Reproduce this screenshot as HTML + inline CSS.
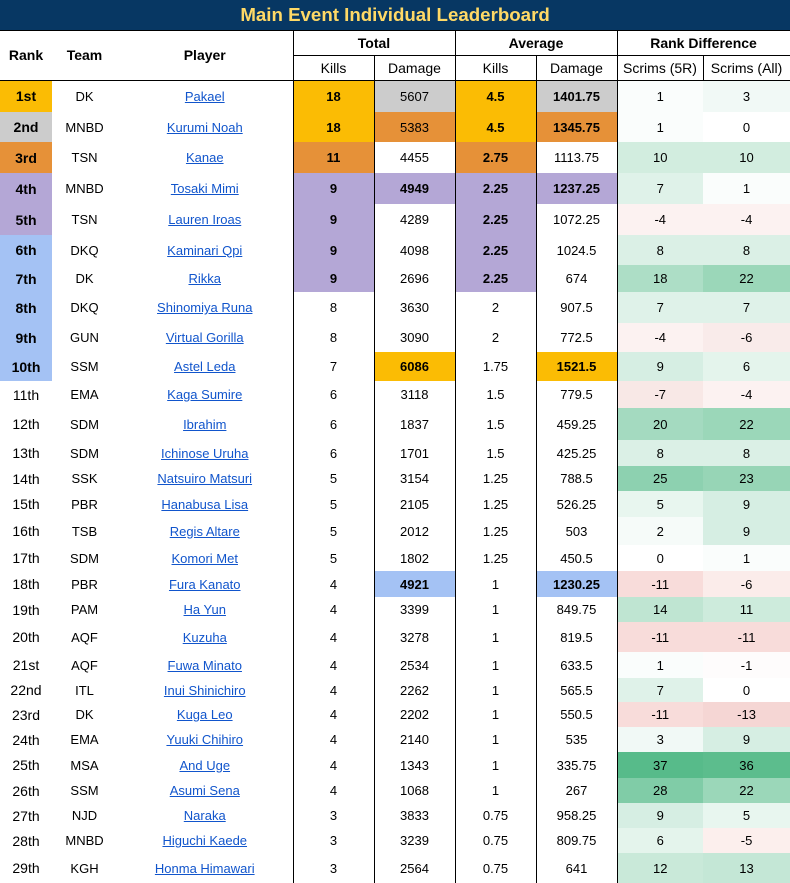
<!DOCTYPE html>
<html><head><meta charset="utf-8"><style>
*{margin:0;padding:0;box-sizing:border-box}
body{width:790px;height:883px;overflow:hidden;background:#fff;font-family:"Liberation Sans",Arial,sans-serif;color:#000}
table{border-collapse:collapse;table-layout:fixed;width:790px}
td{text-align:center;vertical-align:middle;font-size:13px;padding:0;white-space:nowrap;overflow:hidden}
.t td{background:#073763;color:#ffd966;font-weight:bold;font-size:18.7px;border-bottom:1px solid #000}
.h2 td{font-size:14px;border:1px solid #000}
.hb{font-weight:bold;font-size:14px}
.l{border-left:1px solid #000}
.rk{font-size:14px}
b{font-weight:bold}
a{color:#1155cc;text-decoration:underline}
.G{background:#fbbc04}.S{background:#cccccc}.O{background:#e69138}.P{background:#b4a7d6}.B{background:#a4c2f4}
tr.d td.rk.B,tr.d td.rk.G,tr.d td.rk.S,tr.d td.rk.O,tr.d td.rk.P{font-weight:bold}
</style></head><body>
<table>
<colgroup><col style="width:52px"><col style="width:65px"><col style="width:176px"><col style="width:81px"><col style="width:81px"><col style="width:81px"><col style="width:81px"><col style="width:86px"><col style="width:87px"></colgroup>
<tr class="t" style="height:30px"><td colspan="9">Main Event Individual Leaderboard</td></tr>
<tr style="height:25px"><td rowspan="2" class="hb" style="border-bottom:1px solid #000">Rank</td><td rowspan="2" class="hb" style="border-bottom:1px solid #000">Team</td><td rowspan="2" class="hb" style="border-bottom:1px solid #000">Player</td>
<td colspan="2" class="hb" style="border:1px solid #000">Total</td><td colspan="2" class="hb" style="border:1px solid #000">Average</td><td colspan="2" class="hb" style="border:1px solid #000">Rank Difference</td></tr>
<tr class="h2" style="height:25px"><td>Kills</td><td>Damage</td><td>Kills</td><td>Damage</td><td>Scrims (5R)</td><td>Scrims (All)</td></tr>

<tr class="d" style="height:32px"><td class="rk G">1st</td><td>DK</td><td><a>Pakael</a></td><td class="l G"><b>18</b></td><td class="l S">5607</td><td class="l G"><b>4.5</b></td><td class="l S"><b>1401.75</b></td><td class="l" style="background:#fafdfc">1</td><td style="background:#f1f9f6">3</td></tr>
<tr class="d" style="height:30px"><td class="rk S">2nd</td><td>MNBD</td><td><a>Kurumi Noah</a></td><td class="l G"><b>18</b></td><td class="l O">5383</td><td class="l G"><b>4.5</b></td><td class="l O"><b>1345.75</b></td><td class="l" style="background:#fafdfc">1</td><td>0</td></tr>
<tr class="d" style="height:31px"><td class="rk O">3rd</td><td>TSN</td><td><a>Kanae</a></td><td class="l O"><b>11</b></td><td class="l">4455</td><td class="l O"><b>2.75</b></td><td class="l">1113.75</td><td class="l" style="background:#d2eddf">10</td><td style="background:#d2eddf">10</td></tr>
<tr class="d" style="height:31px"><td class="rk P">4th</td><td>MNBD</td><td><a>Tosaki Mimi</a></td><td class="l P"><b>9</b></td><td class="l P"><b>4949</b></td><td class="l P"><b>2.25</b></td><td class="l P"><b>1237.25</b></td><td class="l" style="background:#dff2e9">7</td><td style="background:#fafdfc">1</td></tr>
<tr class="d" style="height:31px"><td class="rk P">5th</td><td>TSN</td><td><a>Lauren Iroas</a></td><td class="l P"><b>9</b></td><td class="l">4289</td><td class="l P"><b>2.25</b></td><td class="l">1072.25</td><td class="l" style="background:#fcf2f1">-4</td><td style="background:#fcf2f1">-4</td></tr>
<tr class="d" style="height:30px"><td class="rk B">6th</td><td>DKQ</td><td><a>Kaminari Qpi</a></td><td class="l P"><b>9</b></td><td class="l">4098</td><td class="l P"><b>2.25</b></td><td class="l">1024.5</td><td class="l" style="background:#dbf0e6">8</td><td style="background:#dbf0e6">8</td></tr>
<tr class="d" style="height:27px"><td class="rk B">7th</td><td>DK</td><td><a>Rikka</a></td><td class="l P"><b>9</b></td><td class="l">2696</td><td class="l P"><b>2.25</b></td><td class="l">674</td><td class="l" style="background:#addec6">18</td><td style="background:#9bd7b9">22</td></tr>
<tr class="d" style="height:31px"><td class="rk B">8th</td><td>DKQ</td><td><a>Shinomiya Runa</a></td><td class="l">8</td><td class="l">3630</td><td class="l">2</td><td class="l">907.5</td><td class="l" style="background:#dff2e9">7</td><td style="background:#dff2e9">7</td></tr>
<tr class="d" style="height:29px"><td class="rk B">9th</td><td>GUN</td><td><a>Virtual Gorilla</a></td><td class="l">8</td><td class="l">3090</td><td class="l">2</td><td class="l">772.5</td><td class="l" style="background:#fcf2f1">-4</td><td style="background:#f9ebea">-6</td></tr>
<tr class="d" style="height:29px"><td class="rk B">10th</td><td>SSM</td><td><a>Astel Leda</a></td><td class="l">7</td><td class="l G"><b>6086</b></td><td class="l">1.75</td><td class="l G"><b>1521.5</b></td><td class="l" style="background:#d6eee3">9</td><td style="background:#e4f4ec">6</td></tr>
<tr class="d" style="height:27px"><td class="rk">11th</td><td>EMA</td><td><a>Kaga Sumire</a></td><td class="l">6</td><td class="l">3118</td><td class="l">1.5</td><td class="l">779.5</td><td class="l" style="background:#f8e8e6">-7</td><td style="background:#fcf2f1">-4</td></tr>
<tr class="d" style="height:32px"><td class="rk">12th</td><td>SDM</td><td><a>Ibrahim</a></td><td class="l">6</td><td class="l">1837</td><td class="l">1.5</td><td class="l">459.25</td><td class="l" style="background:#a4dac0">20</td><td style="background:#9bd7b9">22</td></tr>
<tr class="d" style="height:26px"><td class="rk">13th</td><td>SDM</td><td><a>Ichinose Uruha</a></td><td class="l">6</td><td class="l">1701</td><td class="l">1.5</td><td class="l">425.25</td><td class="l" style="background:#dbf0e6">8</td><td style="background:#dbf0e6">8</td></tr>
<tr class="d" style="height:25px"><td class="rk">14th</td><td>SSK</td><td><a>Natsuiro Matsuri</a></td><td class="l">5</td><td class="l">3154</td><td class="l">1.25</td><td class="l">788.5</td><td class="l" style="background:#8dd1b0">25</td><td style="background:#97d5b6">23</td></tr>
<tr class="d" style="height:26px"><td class="rk">15th</td><td>PBR</td><td><a>Hanabusa Lisa</a></td><td class="l">5</td><td class="l">2105</td><td class="l">1.25</td><td class="l">526.25</td><td class="l" style="background:#e8f6ef">5</td><td style="background:#d6eee3">9</td></tr>
<tr class="d" style="height:28px"><td class="rk">16th</td><td>TSB</td><td><a>Regis Altare</a></td><td class="l">5</td><td class="l">2012</td><td class="l">1.25</td><td class="l">503</td><td class="l" style="background:#f6fbf9">2</td><td style="background:#d6eee3">9</td></tr>
<tr class="d" style="height:26px"><td class="rk">17th</td><td>SDM</td><td><a>Komori Met</a></td><td class="l">5</td><td class="l">1802</td><td class="l">1.25</td><td class="l">450.5</td><td class="l">0</td><td style="background:#fafdfc">1</td></tr>
<tr class="d" style="height:26px"><td class="rk">18th</td><td>PBR</td><td><a>Fura Kanato</a></td><td class="l">4</td><td class="l B"><b>4921</b></td><td class="l">1</td><td class="l B"><b>1230.25</b></td><td class="l" style="background:#f8dcda">-11</td><td style="background:#fbecea">-6</td></tr>
<tr class="d" style="height:25px"><td class="rk">19th</td><td>PAM</td><td><a>Ha Yun</a></td><td class="l">4</td><td class="l">3399</td><td class="l">1</td><td class="l">849.75</td><td class="l" style="background:#bfe5d2">14</td><td style="background:#cdebdc">11</td></tr>
<tr class="d" style="height:30px"><td class="rk">20th</td><td>AQF</td><td><a>Kuzuha</a></td><td class="l">4</td><td class="l">3278</td><td class="l">1</td><td class="l">819.5</td><td class="l" style="background:#f8dcda">-11</td><td style="background:#f8dcda">-11</td></tr>
<tr class="d" style="height:26px"><td class="rk">21st</td><td>AQF</td><td><a>Fuwa Minato</a></td><td class="l">4</td><td class="l">2534</td><td class="l">1</td><td class="l">633.5</td><td class="l" style="background:#fafdfc">1</td><td style="background:#fefcfc">-1</td></tr>
<tr class="d" style="height:24px"><td class="rk">22nd</td><td>ITL</td><td><a>Inui Shinichiro</a></td><td class="l">4</td><td class="l">2262</td><td class="l">1</td><td class="l">565.5</td><td class="l" style="background:#dff2e9">7</td><td>0</td></tr>
<tr class="d" style="height:25px"><td class="rk">23rd</td><td>DK</td><td><a>Kuga Leo</a></td><td class="l">4</td><td class="l">2202</td><td class="l">1</td><td class="l">550.5</td><td class="l" style="background:#f8dcda">-11</td><td style="background:#f5d6d4">-13</td></tr>
<tr class="d" style="height:25px"><td class="rk">24th</td><td>EMA</td><td><a>Yuuki Chihiro</a></td><td class="l">4</td><td class="l">2140</td><td class="l">1</td><td class="l">535</td><td class="l" style="background:#f1f9f6">3</td><td style="background:#d6eee3">9</td></tr>
<tr class="d" style="height:26px"><td class="rk">25th</td><td>MSA</td><td><a>And Uge</a></td><td class="l">4</td><td class="l">1343</td><td class="l">1</td><td class="l">335.75</td><td class="l" style="background:#57bb8a">37</td><td style="background:#5cbd8d">36</td></tr>
<tr class="d" style="height:25px"><td class="rk">26th</td><td>SSM</td><td><a>Asumi Sena</a></td><td class="l">4</td><td class="l">1068</td><td class="l">1</td><td class="l">267</td><td class="l" style="background:#80cca7">28</td><td style="background:#9bd7b9">22</td></tr>
<tr class="d" style="height:25px"><td class="rk">27th</td><td>NJD</td><td><a>Naraka</a></td><td class="l">3</td><td class="l">3833</td><td class="l">0.75</td><td class="l">958.25</td><td class="l" style="background:#d6eee3">9</td><td style="background:#e8f6ef">5</td></tr>
<tr class="d" style="height:25px"><td class="rk">28th</td><td>MNBD</td><td><a>Higuchi Kaede</a></td><td class="l">3</td><td class="l">3239</td><td class="l">0.75</td><td class="l">809.75</td><td class="l" style="background:#e4f4ec">6</td><td style="background:#fcefed">-5</td></tr>
<tr class="d" style="height:30px"><td class="rk">29th</td><td>KGH</td><td><a>Honma Himawari</a></td><td class="l">3</td><td class="l">2564</td><td class="l">0.75</td><td class="l">641</td><td class="l" style="background:#c9e9d9">12</td><td style="background:#c4e7d6">13</td></tr>
</table>
</body></html>
